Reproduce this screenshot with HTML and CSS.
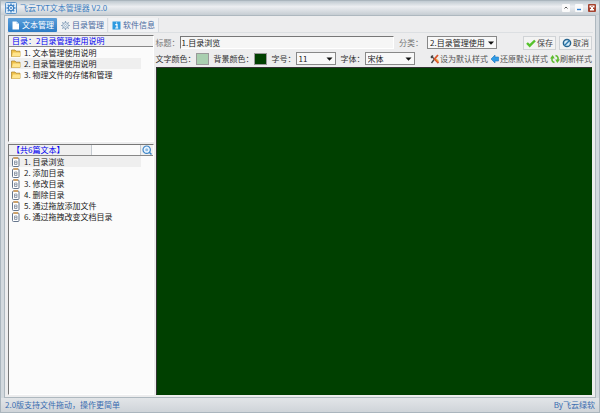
FILE: index.html
```html
<!DOCTYPE html>
<html lang="zh-CN">

<head>
    <meta charset="UTF-8">
    <meta name="viewport" content="width=device-width, initial-scale=1.0">
    <title>飞云TXT文本管理器 V2.0</title>
    <link rel="stylesheet" href="styles.css">
</head>

<body>
    <svg class="symbols" aria-hidden="true">
        <symbol id="icon-folder" viewBox="0 0 10 9">
            <path d="M.5 8V1.5H4l1 1.2h4V8z" fill="#eec04a" stroke="#a98024" stroke-width=".7" />
            <path d="M1 7.500 2 4h7.500L9 8H1z" fill="#ffe58e" />
        </symbol>
        <symbol id="icon-file" viewBox="0 0 10 10">
            <rect x="1.500" y="1" width="6.500" height="8.500" rx="1" fill="#fff" stroke="#66768c" />
            <path d="M2.500 1H7" stroke="#d99a4a" stroke-width="1.500" />
            <path d="M3.500 4H6v3.500H3.500zM3.500 5.700H6" fill="none" stroke="#7f8a9c" stroke-width=".8" />
        </symbol>
    </svg>

    <header class="titlebar">
        <svg class="logo" viewBox="0 0 12 12">
            <rect x=".5" y=".5" width="11" height="11" rx="1" fill="#dcebf9" stroke="#5b93c8" />
            <path d="M6 1.500v9M1.500 6h9M2.800 2.800l6.400 6.400M9.200 2.800 2.800 9.200" stroke="#4a8bc9" stroke-width="1.400" />
            <circle cx="6" cy="6" r="2.600" fill="#fff" stroke="#3a7fc4" stroke-width="1.200" />
            <circle cx="6" cy="6" r="1" fill="#3a7fc4" />
        </svg>
        <h1>飞云TXT文本管理器 V2.0</h1>
        <div class="window-buttons">
            <button type="button" aria-label="收起">
                <svg viewBox="0 0 8 8"><path d="M2.5 4.5 4 3l1.500 1.500" fill="none" stroke="#555" /></svg>
            </button>
            <button type="button" aria-label="最小化">
                <svg viewBox="0 0 8 8"><path d="M2 5.500h4" fill="none" stroke="#2f7fd0" stroke-width="1.400" /></svg>
            </button>
            <button type="button" class="close" aria-label="关闭">
                <svg viewBox="0 0 8 8"><path d="M1.500 1.500h5v2h-1.500v1.500h1v1.500h-4V5h1V3.500H1.500z" fill="#fff" /><path d="M3.300 2.500h1.400" stroke="#a5432f" stroke-width=".8" /></svg>
            </button>
        </div>
    </header>

    <main class="window">
        <nav class="tabs">
            <button type="button" class="tab active">
                <svg viewBox="0 0 9 9"><path d="M1.500 .5h4L8 3v5.500H1.500z" fill="#fff" /><path d="M5.500 .5V3H8" fill="#b9d6f2" /></svg>
                文本管理
            </button>
            <button type="button" class="tab">
                <svg viewBox="0 0 9 9"><path d="M4.500 0v9M0 4.500h9M1.300 1.300l6.400 6.400M7.700 1.300 1.300 7.700" stroke="#8fa6be" stroke-width="1.200" /><circle cx="4.500" cy="4.500" r="2.800" fill="#eef3f8" stroke="#8fa6be" /><circle cx="4.500" cy="4.500" r="1" fill="none" stroke="#8fa6be" stroke-width=".7" /></svg>
                目录管理
            </button>
            <button type="button" class="tab">
                <svg viewBox="0 0 9 9"><rect x=".5" y=".5" width="8" height="8" fill="#2d9ae0" /><path d="M3.300 3.700H5V7M3.200 7h3M4 2h1.200" fill="none" stroke="#fff" stroke-width="1.200" /></svg>
                软件信息
            </button>
        </nav>

        <div class="content">
            <aside class="sidebar">
                <section class="panel folders">
                    <h2>目录：2目录管理使用说明</h2>
                    <ul>
                        <li><svg><use href="#icon-folder" /></svg><span>1. 文本管理使用说明</span></li>
                        <li class="selected"><svg><use href="#icon-folder" /></svg><span>2. 目录管理使用说明</span></li>
                        <li><svg><use href="#icon-folder" /></svg><span>3. 物理文件的存储和管理</span></li>
                    </ul>
                </section>

                <section class="panel files">
                    <div class="files-head">
                        <h2>【共6篇文本】</h2>
                        <input type="text" class="search" aria-label="搜索">
                        <button type="button" class="search-button" aria-label="搜索文本">
                            <svg viewBox="0 0 10 10"><circle cx="4.700" cy="4.700" r="3.700" fill="#eaf5ff" stroke="#3f86c8" stroke-width="1.200" /><circle cx="4.700" cy="4.700" r="1.500" fill="#8fbde6" /><path d="m7.300 7.300 2.200 2.200" stroke="#3f86c8" stroke-width="1.500" /></svg>
                        </button>
                    </div>
                    <ul>
                        <li class="selected"><svg><use href="#icon-file" /></svg><span>1. 目录浏览</span></li>
                        <li><svg><use href="#icon-file" /></svg><span>2. 添加目录</span></li>
                        <li><svg><use href="#icon-file" /></svg><span>3. 修改目录</span></li>
                        <li><svg><use href="#icon-file" /></svg><span>4. 删除目录</span></li>
                        <li><svg><use href="#icon-file" /></svg><span>5. 通过拖放添加文件</span></li>
                        <li><svg><use href="#icon-file" /></svg><span>6. 通过拖拽改变文档目录</span></li>
                    </ul>
                </section>
            </aside>

            <form class="editor">
                <div class="row">
                    <label class="muted" for="title">标题：</label>
                    <input type="text" id="title" class="title-input" value="1.目录浏览">
                    <label class="muted" for="category">分类：</label>
                    <span class="dropdown category">
                        <select id="category"><option>2.目录管理使用说明</option></select>
                    </span>
                    <div class="actions">
                        <button type="button" class="action">
                            <svg viewBox="0 0 10 10"><path d="m1 5 2.700 2.700L9 2.500" fill="none" stroke="#56c22c" stroke-width="2.400" /></svg>
                            保存
                        </button>
                        <button type="button" class="action">
                            <svg viewBox="0 0 10 10"><circle cx="5" cy="5" r="3.600" fill="#d8eefa" stroke="#27658f" stroke-width="1.500" /><path d="m2.500 7.500 5-5" stroke="#2d78ac" stroke-width="1.500" /></svg>
                            取消
                        </button>
                    </div>
                </div>

                <div class="row">
                    <label for="text-color">文字颜色：</label>
                    <input type="color" id="text-color" class="swatch" value="#a9cfb0">
                    <label for="back-color">背景颜色：</label>
                    <input type="color" id="back-color" class="swatch" value="#004000">
                    <label for="size">字号：</label>
                    <span class="dropdown size">
                        <select id="size"><option>11</option></select>
                    </span>
                    <label for="font">字体：</label>
                    <span class="dropdown font">
                        <select id="font"><option>宋体</option></select>
                    </span>
                    <div class="style-links">
                        <button type="button">
                            <svg viewBox="0 0 10 10"><path d="m1 2 3.500 3L1.500 9M1 4l2-2.500" fill="none" stroke="#444" stroke-width="1.300" /><path d="M8 1 4.500 5l4 4" fill="none" stroke="#d9542b" stroke-width="1.800" /><path d="m6 5 2.500 2.500" stroke="#f0a23a" stroke-width="1.200" /></svg>
                            设为默认样式
                        </button>
                        <button type="button">
                            <svg viewBox="0 0 10 10"><path d="M1 5l4-4v2h3.500v4H5v2z" fill="#2e9be6" stroke="#1d76bd" stroke-width=".6" /></svg>
                            还原默认样式
                        </button>
                        <button type="button">
                            <svg viewBox="0 0 10 10"><path d="M4.500 8.500C2 8 1.500 6 2.200 3.500M5.500 1.500C8 2 8.500 4 7.800 6.500" fill="none" stroke="#5dbb2f" stroke-width="1.600" /><path d="M0 4.500 2.700 1l2.100 3.500zM5.200 5.500H10L7.300 9z" fill="#5dbb2f" /></svg>
                            刷新样式
                        </button>
                    </div>
                </div>

                <textarea class="text" aria-label="正文"></textarea>
            </form>
        </div>
    </main>

    <footer class="statusbar">
        <span>2.0版支持文件拖动，操作更简单</span>
        <span>By飞云绿软</span>
    </footer>
</body>

</html>
```
FILE: styles.css
```css
* {
    box-sizing: border-box;
}

body {
    display: flex;
    flex-direction: column;
    height: 100vh;
    margin: 0;
    border: 1px solid #aab5bd;
    background-color: #d3d9de;
    font-family: "Noto Sans CJK SC", sans-serif;
    font-size: 8px;
    line-height: 10px;
    color: #222;
    overflow: hidden;
}

button,
input,
select,
textarea {
    margin: 0;
    padding: 0;
    border: 0;
    font: inherit;
    color: inherit;
}

button {
    display: flex;
    align-items: center;
    background: none;
    white-space: nowrap;
}

svg {
    display: block;
    flex: none;
    width: 10px;
    height: 10px;
}

.symbols {
    display: none;
}

h1,
h2 {
    margin: 0;
    font-size: 8px;
    font-weight: normal;
}

ul {
    margin: 0;
    padding: 0;
    list-style: none;
}

label {
    white-space: nowrap;
    color: #333;
}

/* Barra de título */
.titlebar {
    display: flex;
    align-items: center;
    gap: 3px;
    height: 14px;
    padding: 0 3px 0 4px;
    background: linear-gradient(#c0cad1, #eceef1 40%, #c6cdd3);
    color: #3f7fc0;
}

.logo {
    width: 12px;
    height: 12px;
}

.window-buttons {
    display: flex;
    gap: 5px;
    margin-left: auto;
}

.window-buttons button {
    border-radius: 1px;
    background-color: #fafafa;
}

.window-buttons svg {
    width: 8px;
    height: 8px;
}

.window-buttons .close {
    background-color: #a5432f;
}

/* Ventana */
.window {
    flex: 1;
    display: flex;
    flex-direction: column;
    min-height: 0;
    margin: 0 3px;
    padding: 2px;
    border: 1px solid #aeb8bf;
    background-color: #ededee;
}

.tabs {
    display: flex;
    gap: 1px;
    padding-left: 1px;
    border-bottom: 1px solid #dcdfe2;
}

.tab {
    gap: 2px;
    height: 14px;
    padding: 0 3px;
    border: 0 solid #d8dce1;
    border-right-width: 1px;
    background-color: #f1f2f4;
    color: #4a6aa0;
}

.tab svg {
    width: 9px;
    height: 9px;
}

.tab.active {
    border-right-width: 0;
    border-radius: 1px;
    background: linear-gradient(#5b9fda, #2c7cc6);
    color: #fff;
}

.content {
    flex: 1;
    display: grid;
    grid-template-columns: 1fr 3fr;
    gap: 2px;
    min-height: 0;
    padding: 2px 1px 0;
}

/* Listas */
.sidebar {
    display: grid;
    grid-template-rows: 3fr 7fr;
    gap: 2px;
    min-width: 0;
    min-height: 0;
}

.panel {
    border: 1px solid #fff;
    border-top-color: #777;
    border-left-color: #777;
    background-color: #fbfbfb;
    overflow: hidden;
}

.panel h2 {
    color: #0000f0;
}

.folders h2 {
    height: 11px;
    padding-left: 3px;
    border-bottom: 1px solid #888;
    background-color: #f0f0f0;
}

.files-head {
    display: flex;
    height: 11px;
    border-bottom: 1px solid #888;
    background-color: #f0f0f0;
}

.files-head h2 {
    flex: 1;
    padding-left: 3px;
}

.search {
    width: 50px;
    border: 0 solid #c4cad0;
    border-left-width: 1px;
    border-right-width: 1px;
    background-color: #fbfbfb;
}

.search-button {
    padding: 0 1px;
}

.panel li {
    display: flex;
    align-items: center;
    gap: 3px;
    height: 11px;
    padding-left: 2px;
    white-space: nowrap;
}

.panel .selected {
    margin-right: 12px;
    background-color: #efefef;
}

/* Editor */
.editor {
    display: flex;
    flex-direction: column;
    min-width: 0;
}

.row {
    display: flex;
    align-items: center;
    height: 15px;
    margin-bottom: 1px;
}

.muted {
    color: #777;
}

.title-input {
    flex: 1;
    min-width: 0;
    height: 13px;
    margin-right: 5px;
    padding: 0 1px;
    border: 1px solid #fff;
    border-top-color: #777;
    border-left-color: #777;
    background-color: #f6f6f6;
}

.dropdown {
    position: relative;
    height: 13px;
    border: 1px solid #888;
    background-color: #f8f8f8;
}

.dropdown select {
    display: block;
    width: 100%;
    height: 11px;
    padding: 0 11px 0 2px;
    appearance: none;
    background: none;
}

/* Flecha de la lista */
.dropdown::after {
    content: "";
    position: absolute;
    top: 0;
    right: 0;
    width: 10px;
    height: 11px;
    background: #111;
    clip-path: polygon(20% 40%, 80% 40%, 50% 70%);
    pointer-events: none;
}

.category {
    width: 70px;
    margin-left: 4px;
}

.size {
    width: 40px;
    margin-right: 5px;
}

.font {
    width: 50px;
}

.swatch {
    width: 13px;
    height: 12px;
    margin-right: 5px;
    border: 1px solid #999;
    background: none;
}

.swatch::-webkit-color-swatch-wrapper {
    padding: 0;
}

.swatch::-webkit-color-swatch {
    border: 0;
    border-radius: 0;
}

.actions {
    display: flex;
    gap: 3px;
    margin-left: 26px;
}

.action {
    gap: 1px;
    height: 14px;
    padding: 0 2px;
    border: 1px solid #d0d3d6;
    background-color: #f3f3f3;
    color: #444;
}

.style-links {
    display: flex;
    gap: 2px;
    margin-left: auto;
}

.style-links button {
    color: #555;
}

.text {
    flex: 1;
    border: 1px solid #333;
    border-right-color: #004000;
    border-bottom-color: #004000;
    background-color: #004000;
    color: #a9cfb0;
    resize: none;
}

/* Barra de estado */
.statusbar {
    display: flex;
    justify-content: space-between;
    align-items: center;
    height: 14px;
    padding: 0 4px;
    background: linear-gradient(#e2e5e8, #cfd4d9);
    color: #3a6db0;
}
```
